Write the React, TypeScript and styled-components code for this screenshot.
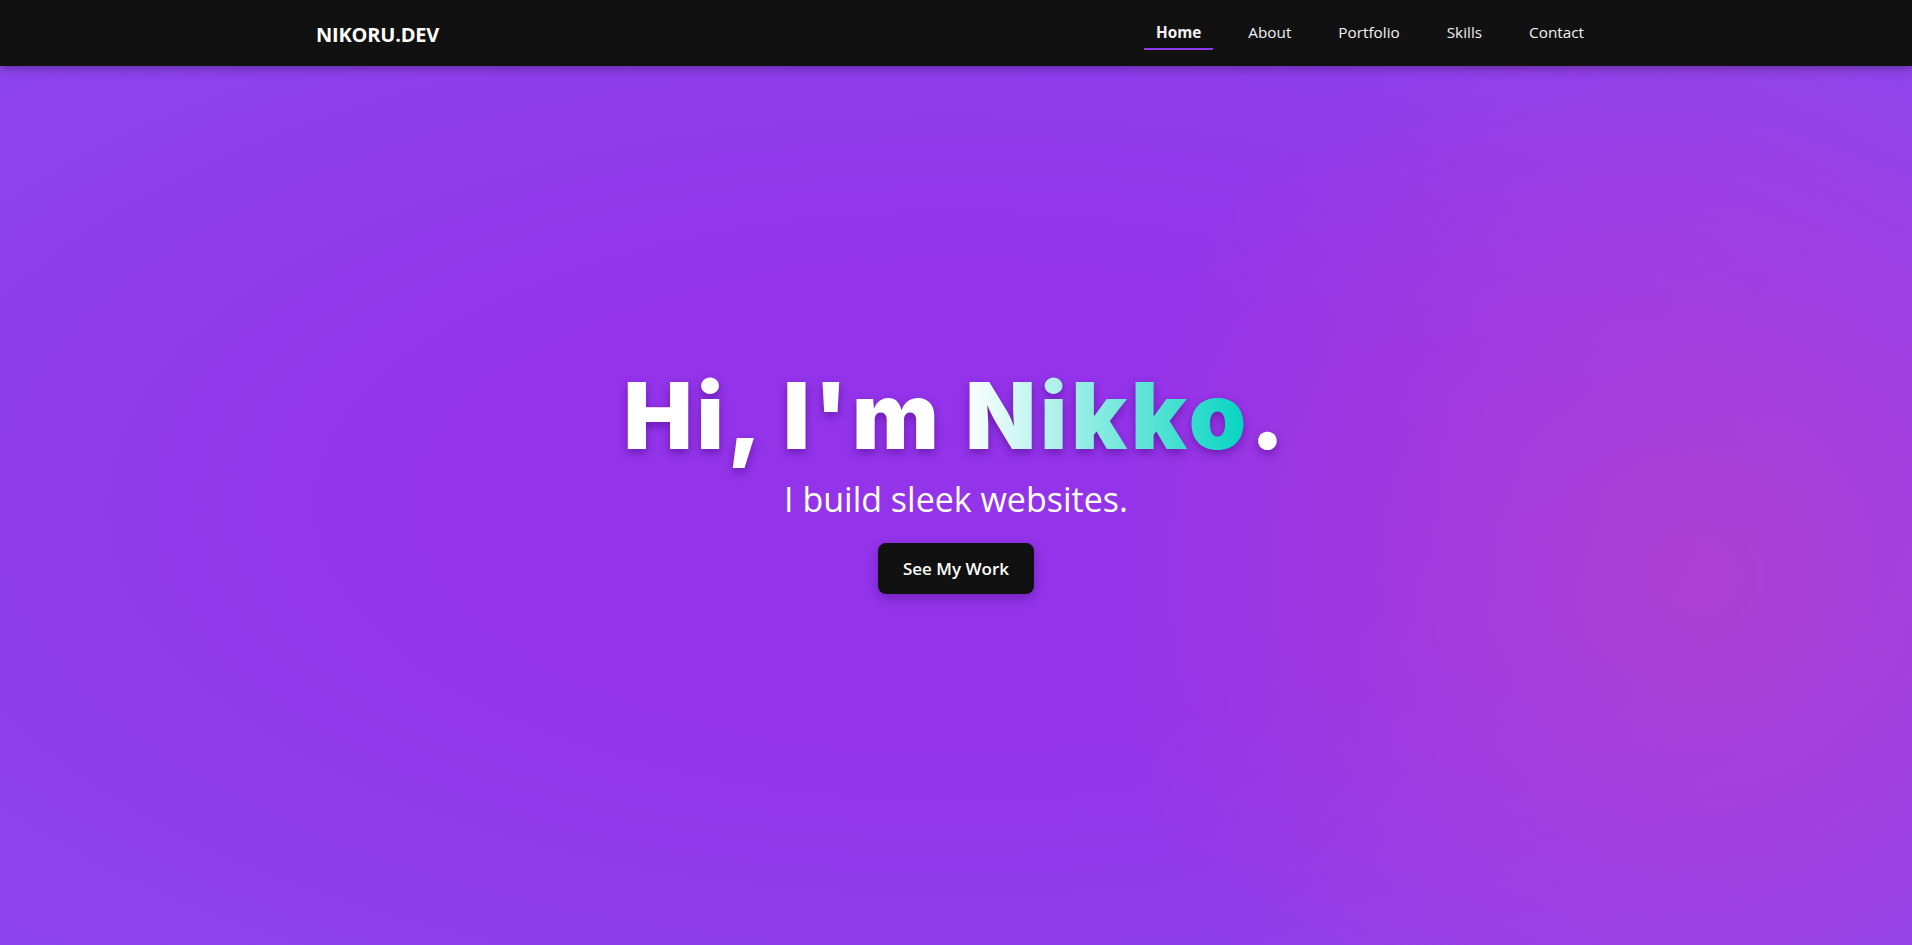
import React from "react";
import styled, { createGlobalStyle } from "styled-components";

const GlobalStyle = createGlobalStyle`
  * { box-sizing: border-box; }
  html, body { margin: 0; padding: 0; }
  body {
    font-family: "Open Sans", "Noto Sans", sans-serif;
    background: #111;
    color: #fff;
    overflow: hidden;
  }
`;

const Page = styled.div`
  display: flex;
  flex-direction: column;
  height: 100vh;
`;

const NavBar = styled.header`
  height: 66px;
  flex: 0 0 66px;
  background: #111111;
  box-shadow: 0 2px 10px rgba(0, 0, 0, 0.35);
  position: relative;
  z-index: 2;
`;

const NavInner = styled.nav`
  max-width: 1280px;
  height: 100%;
  margin: 0 auto;
  display: flex;
  align-items: center;
  justify-content: space-between;
`;

const Logo = styled.a`
  font-family: "Open Sans", sans-serif;
  font-weight: 700;
  font-size: 20px;
  letter-spacing: -0.2px;
  color: #fff;
  text-decoration: none;
  padding-top: 2px;
`;

const Links = styled.ul`
  display: flex;
  list-style: none;
  margin: 0;
  padding: 0;
  gap: 23px;
`;

const NavLink = styled.a<{ $active?: boolean }>`
  display: block;
  padding: 5px 12px 6px;
  font-family: "Open Sans", sans-serif;
  font-size: 15.3px;
  font-weight: ${(p) => (p.$active ? 700 : 400)};
  color: #f2f2f2;
  text-decoration: none;
  border-bottom: 2px solid ${(p) => (p.$active ? "#8b3bf0" : "transparent")};
`;

const Hero = styled.main`
  flex: 1;
  display: flex;
  flex-direction: column;
  align-items: center;
  justify-content: center;
  padding-bottom: 56px;
  background-color: #9333ea;
  background-image:
    radial-gradient(circle at 89% 58%, rgba(184, 66, 204, 0.75) 0%, rgba(184, 66, 204, 0) 34%),
    radial-gradient(ellipse at 50% 50%, rgba(147, 51, 234, 0) 35%, rgba(141, 68, 238, 1) 100%);
`;

const Title = styled.h1`
  margin: 0;
  font-family: Inter, "Open Sans", sans-serif;
  font-weight: 900;
  font-size: 92px;
  line-height: 1.2;
  letter-spacing: 4px;
  color: #fff;
  filter: drop-shadow(0 4px 5px rgba(60, 0, 110, 0.45));
`;

const Accent = styled.span`
  background: linear-gradient(90deg, #ffffff 0%, #00d4c0 100%);
  -webkit-background-clip: text;
  background-clip: text;
  color: transparent;
`;

const Subtitle = styled.p`
  margin: 6px 0 0;
  font-family: "Open Sans", sans-serif;
  font-weight: 400;
  font-size: 34px;
  line-height: 1.3;
  color: #fff;
`;

const CTA = styled.a`
  margin-top: 22px;
  display: inline-flex;
  align-items: center;
  justify-content: center;
  width: 156px;
  height: 51px;
  border-radius: 8px;
  background: #111111;
  color: #fff;
  font-family: "Open Sans", sans-serif;
  font-weight: 600;
  font-size: 17px;
  text-decoration: none;
  box-shadow: 0 4px 12px rgba(40, 0, 80, 0.3);
`;

export default function App() {
  const links = ["Home", "About", "Portfolio", "Skills", "Contact"];
  return (
    <>
      <GlobalStyle />
      <Page>
        <NavBar>
          <NavInner>
            <Logo href="#">NIKORU.DEV</Logo>
            <Links>
              {links.map((l) => (
                <li key={l}>
                  <NavLink href="#" $active={l === "Home"}>
                    {l}
                  </NavLink>
                </li>
              ))}
            </Links>
          </NavInner>
        </NavBar>
        <Hero>
          <Title>
            Hi, I'm <Accent>Nikko</Accent>.
          </Title>
          <Subtitle>I build sleek websites.</Subtitle>
          <CTA href="#">See My Work</CTA>
        </Hero>
      </Page>
    </>
  );
}
